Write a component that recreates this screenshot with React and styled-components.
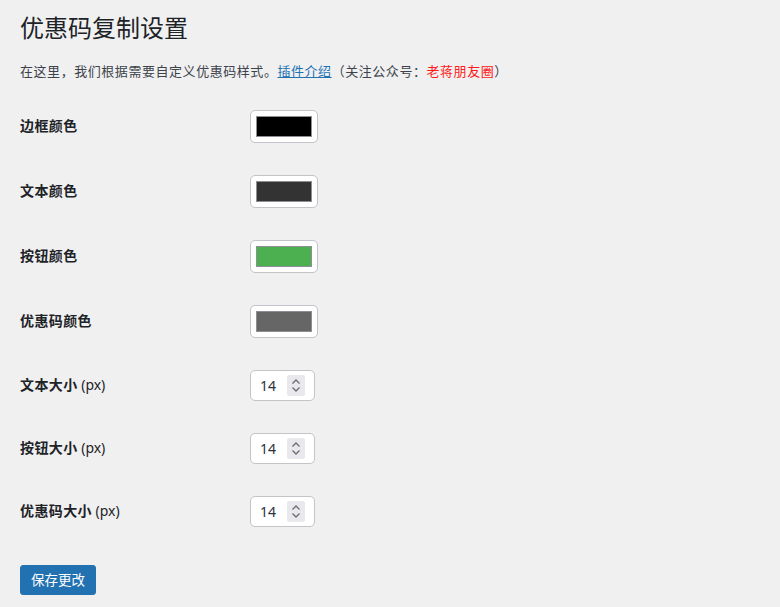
import React from "react";
import styled, { createGlobalStyle } from "styled-components";

const GlobalStyle = createGlobalStyle`
  html, body {
    margin: 0;
    padding: 0;
    background: #f0f0f1;
  }
  body {
    font-family: "Noto Sans", "Noto Sans CJK SC", sans-serif;
    color: #1d2327;
  }
`;

const Wrap = styled.div`
  padding: 12px 20px 20px 20px;
`;

const Title = styled.h1`
  font-family: "Noto Sans CJK SC", sans-serif;
  font-size: 24px;
  font-weight: 400;
  line-height: 30px;
  margin: 0;
  color: #1d2327;
`;

const Desc = styled.p`
  font-family: "Noto Sans CJK SC", sans-serif;
  font-size: 13px;
  letter-spacing: 0.55px;
  line-height: 20px;
  margin: 19px 0 13px 0;
  color: #3c434a;

  a {
    color: #2271b1;
    text-decoration: underline;
  }
  span {
    color: #ff1a1a;
  }
`;

const Row = styled.div`
  display: flex;
  align-items: center;
  height: ${(p) => p.$h}px;
`;

const Label = styled.div`
  width: 230px;
  padding-bottom: 3px;
  font-family: "Noto Sans CJK SC", sans-serif;
  font-size: 14px;
  letter-spacing: 0.4px;
  font-weight: 700;
  color: #1d2327;

  small {
    font-family: "Noto Sans", sans-serif;
    font-size: 14px;
    letter-spacing: 0;
    font-weight: 400;
  }
`;

const ColorButton = styled.button`
  box-sizing: border-box;
  width: 68px;
  height: 33px;
  padding: 5px;
  background: #fff;
  border: 1px solid #c3c4c7;
  border-radius: 5px;
  display: flex;
  cursor: pointer;
`;

const Swatch = styled.span`
  flex: 1;
  background: ${(p) => p.$color};
  border: 1px solid #8c8f94;
`;

const NumberBox = styled.div`
  box-sizing: border-box;
  width: 65px;
  height: 31px;
  background: #fff;
  border: 1px solid #c3c4c7;
  border-radius: 5px;
  display: flex;
  align-items: center;
  padding: 0 9px 0 9px;
  font-family: "Noto Sans", sans-serif;
  font-size: 14px;
  color: #2c3338;
`;

const NumValue = styled.span`
  flex: 1;
`;

const Spinner = styled.span`
  width: 18px;
  height: 21px;
  background: #e9e9ed;
  border-radius: 2px;
  display: flex;
  align-items: center;
  justify-content: center;
`;

const SaveButton = styled.button`
  margin-top: 22px;
  box-sizing: border-box;
  width: 76px;
  height: 30px;
  padding: 0 0 2px 0;
  background: #2271b1;
  border: 1px solid #2271b1;
  border-radius: 3px;
  color: #fff;
  font-family: "Noto Sans CJK SC", sans-serif;
  font-size: 13.5px;
  cursor: pointer;
`;

const colors = [
  { label: "边框颜色", color: "#000000" },
  { label: "文本颜色", color: "#333333" },
  { label: "按钮颜色", color: "#4caf50" },
  { label: "优惠码颜色", color: "#666666" },
];

const sizes = [
  { label: "文本大小", value: 14 },
  { label: "按钮大小", value: 14 },
  { label: "优惠码大小", value: 14 },
];

const SpinIcon = () => (
  <svg width="10" height="15" viewBox="0 0 10 15" fill="none" stroke="#6b6b70" strokeWidth="1.3">
    <path d="M1.5 5.5 L5 2 L8.5 5.5" />
    <path d="M1.5 9.5 L5 13 L8.5 9.5" />
  </svg>
);

export default function App() {
  return (
    <>
      <GlobalStyle />
      <Wrap>
        <Title>优惠码复制设置</Title>
        <Desc>
          在这里，我们根据需要自定义优惠码样式。<a href="#">插件介绍</a>（关注公众号：<span>老蒋朋友圈</span>）
        </Desc>
        {colors.map((c) => (
          <Row key={c.label} $h={65}>
            <Label>{c.label}</Label>
            <ColorButton type="button">
              <Swatch $color={c.color} />
            </ColorButton>
          </Row>
        ))}
        {sizes.map((s) => (
          <Row key={s.label} $h={63}>
            <Label>
              {s.label} <small>(px)</small>
            </Label>
            <NumberBox>
              <NumValue>{s.value}</NumValue>
              <Spinner>
                <SpinIcon />
              </Spinner>
            </NumberBox>
          </Row>
        ))}
        <SaveButton type="button">保存更改</SaveButton>
      </Wrap>
    </>
  );
}
